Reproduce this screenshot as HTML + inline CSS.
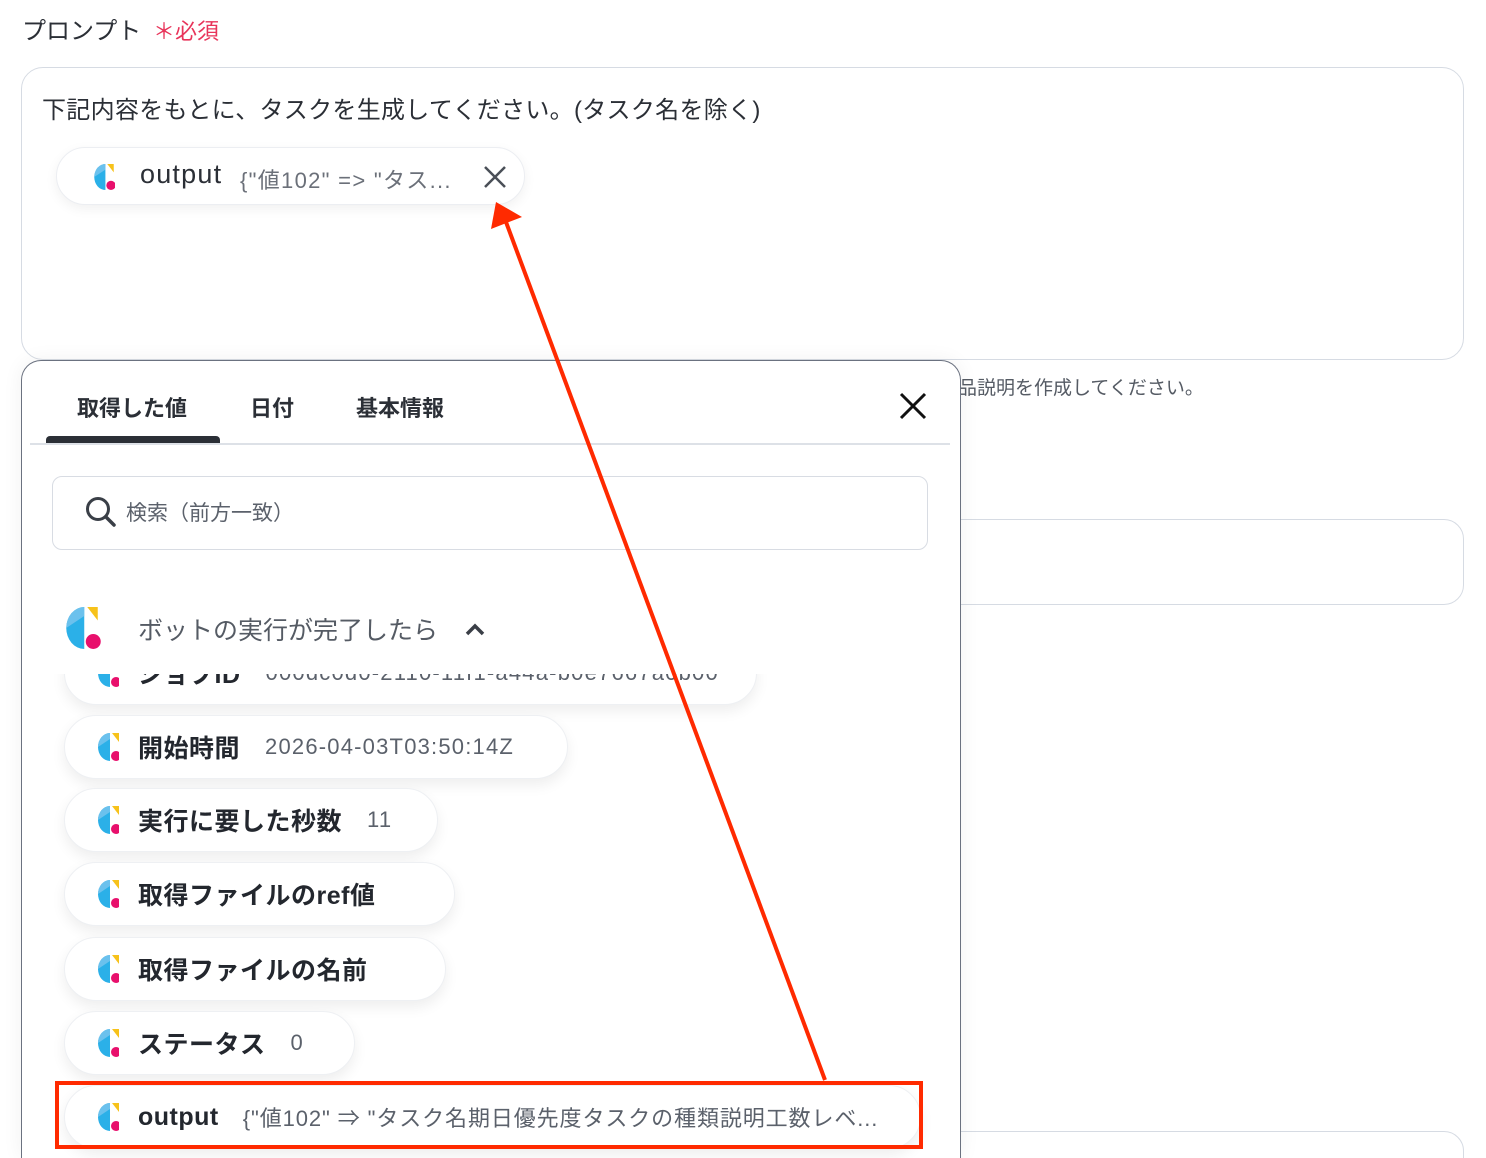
<!DOCTYPE html>
<html style="overflow:hidden;height:1158px"><head><meta charset="utf-8"><style>
*{box-sizing:border-box;margin:0;padding:0}
body{width:1486px;height:1158px;overflow:hidden;background:#fff;position:relative;font-family:"Liberation Sans","Noto Sans CJK JP",sans-serif;color:#2b2f36}
.abs{position:absolute}
.pill{position:absolute;left:64px;height:64px;background:#fff;border:1px solid #eef0f3;border-radius:32px;box-shadow:0 6px 14px rgba(0,0,0,.07);display:flex;align-items:center;padding-left:33px;white-space:nowrap}
.pill .k{font-size:25px;font-weight:bold;color:#23272e;margin-left:19px;letter-spacing:.5px}
.pill .v{font-size:22px;color:#5b616b;margin-left:25px;letter-spacing:1.2px}
</style></head><body>
<svg width="0" height="0" style="position:absolute"><defs>
<g id="lg"><path d="M12 0 A12 14 0 0 0 12 28 Z" fill="#2bb0e8"/><path d="M12 0 A12 14 0 0 0 0 14 L12 6 Z" fill="#7cc6ee" opacity=".8"/><path d="M14 0 L21 0 L21 9 Z" fill="#f7c21a"/><circle cx="18" cy="23" r="5" fill="#e8106c"/></g>
</defs></svg>

<div class="abs" style="left:22px;top:11px;font-size:24px;color:#2b2f36">プロンプト</div>
<div class="abs" style="left:153px;top:14px;font-size:22px;color:#e8345a">＊必須</div>

<div class="abs" style="left:21px;top:67px;width:1443px;height:293px;border:1.5px solid #d6dbe3;border-radius:22px"></div>
<div class="abs" style="left:42px;top:90px;font-size:24px;color:#2b2f36;letter-spacing:.3px">下記内容をもとに、タスクを生成してください。(タスク名を除く)</div>
<div class="abs" style="left:56px;top:147px;width:469px;height:58px;border:1px solid #eceef2;border-radius:29px;background:#fff;box-shadow:0 4px 12px rgba(0,0,0,.06)"></div>
<svg class="abs" style="left:93px;top:164px" width="22" height="26" viewBox="0 0 21 28"><use href="#lg"/></svg>
<div class="abs" style="left:140px;top:159px;font-size:27px;color:#2b2f36;letter-spacing:1.2px">output</div>
<div class="abs" style="left:240px;top:163px;font-size:22px;color:#6b7079;letter-spacing:1.3px">{"値102" =&gt; "タス...</div>
<svg class="abs" style="left:482px;top:164px" width="26" height="26"><path d="M3 3L23 23M23 3L3 23" stroke="#4a4f57" stroke-width="2.5"/></svg>

<div class="abs" style="left:958px;top:373px;font-size:19px;color:#555b64">品説明を作成してください。</div>
<div class="abs" style="left:900px;top:519px;width:564px;height:86px;border:1.5px solid #d6dbe3;border-radius:20px"></div>
<div class="abs" style="left:900px;top:1131px;width:564px;height:60px;border:1.5px solid #d6dbe3;border-radius:20px"></div>

<!-- panel -->
<div class="abs" style="left:21px;top:360px;width:940px;height:798px;border:1.5px solid #6b7280;border-bottom:none;border-radius:20px 20px 0 0;background:#fff;box-shadow:0 0 20px rgba(0,0,0,.06);overflow:hidden">
 <div class="abs" style="left:55px;top:30px;font-size:22px;font-weight:bold;color:#2b2f36">取得した値</div>
 <div class="abs" style="left:228px;top:30px;font-size:22px;font-weight:bold;color:#2b2f36">日付</div>
 <div class="abs" style="left:334px;top:30px;font-size:22px;font-weight:bold;color:#2b2f36">基本情報</div>
 <div class="abs" style="left:8px;top:82px;width:920px;height:1.5px;background:#dde1e7"></div>
 <div class="abs" style="left:24px;top:75px;width:174px;height:7px;background:#2b2f36;border-radius:4px 4px 0 0"></div>
 <svg class="abs" style="left:876px;top:30px" width="30" height="30"><path d="M3 3L27 27M27 3L3 27" stroke="#111" stroke-width="3"/></svg>
 <div class="abs" style="left:30px;top:115px;width:876px;height:74px;border:1.5px solid #d8dce3;border-radius:10px"></div>
 <svg class="abs" style="left:62px;top:134px" width="34" height="34"><circle cx="14" cy="14" r="10.5" fill="none" stroke="#3a3f47" stroke-width="3"/><path d="M22 22L30 30" stroke="#3a3f47" stroke-width="3.5" stroke-linecap="round"/></svg>
 <div class="abs" style="left:104px;top:136px;font-size:21px;color:#5b616b">検索（前方一致）</div>

 <div class="pill" style="left:42px;top:280px;width:693px"><svg width="21" height="28" viewBox="0 0 21 28"><use href="#lg"/></svg><span class="k">ジョブID</span><span class="v">000dc0d0-2110-11f1-a44a-b0e7667a0b00</span></div>
 <div class="abs" style="left:0;top:220px;width:938px;height:93px;background:#fff"></div>
 <svg class="abs" style="left:41px;top:246px" width="38" height="42" viewBox="0 0 21 28"><use href="#lg"/></svg>
 <div class="abs" style="left:116px;top:250px;font-size:25px;color:#555b64">ボットの実行が完了したら</div>
 <svg class="abs" style="left:442px;top:260px" width="22" height="16"><path d="M3 13L11 5L19 13" fill="none" stroke="#3a3f47" stroke-width="3.5"/></svg>

 <div class="pill" style="left:42px;top:354px;width:504px"><svg width="21" height="28" viewBox="0 0 21 28"><use href="#lg"/></svg><span class="k">開始時間</span><span class="v">2026-04-03T03:50:14Z</span></div>
 <div class="pill" style="left:42px;top:427px;width:374px"><svg width="21" height="28" viewBox="0 0 21 28"><use href="#lg"/></svg><span class="k">実行に要した秒数</span><span class="v">11</span></div>
 <div class="pill" style="left:42px;top:501px;width:391px"><svg width="21" height="28" viewBox="0 0 21 28"><use href="#lg"/></svg><span class="k">取得ファイルのref値</span></div>
 <div class="pill" style="left:42px;top:576px;width:382px"><svg width="21" height="28" viewBox="0 0 21 28"><use href="#lg"/></svg><span class="k">取得ファイルの名前</span></div>
 <div class="pill" style="left:42px;top:650px;width:291px"><svg width="21" height="28" viewBox="0 0 21 28"><use href="#lg"/></svg><span class="k">ステータス</span><span class="v">0</span></div>
 <div class="pill" style="left:42px;top:724px;width:857px"><svg width="21" height="28" viewBox="0 0 21 28"><use href="#lg"/></svg><span class="k">output</span><span class="v" style="margin-left:24px;letter-spacing:.9px">{"値102" ⇒ "タスク名期日優先度タスクの種類説明工数レベ...</span></div>
</div>

<div class="abs" style="left:55px;top:1081px;width:868px;height:68px;border:4px solid #ff2a00"></div>
<svg class="abs" style="left:0;top:0" width="1486" height="1158"><path d="M825 1080L506 222" stroke="#ff2a00" stroke-width="4"/><path d="M496 202L491 229L522 217Z" fill="#ff2a00"/></svg>
</body></html>
